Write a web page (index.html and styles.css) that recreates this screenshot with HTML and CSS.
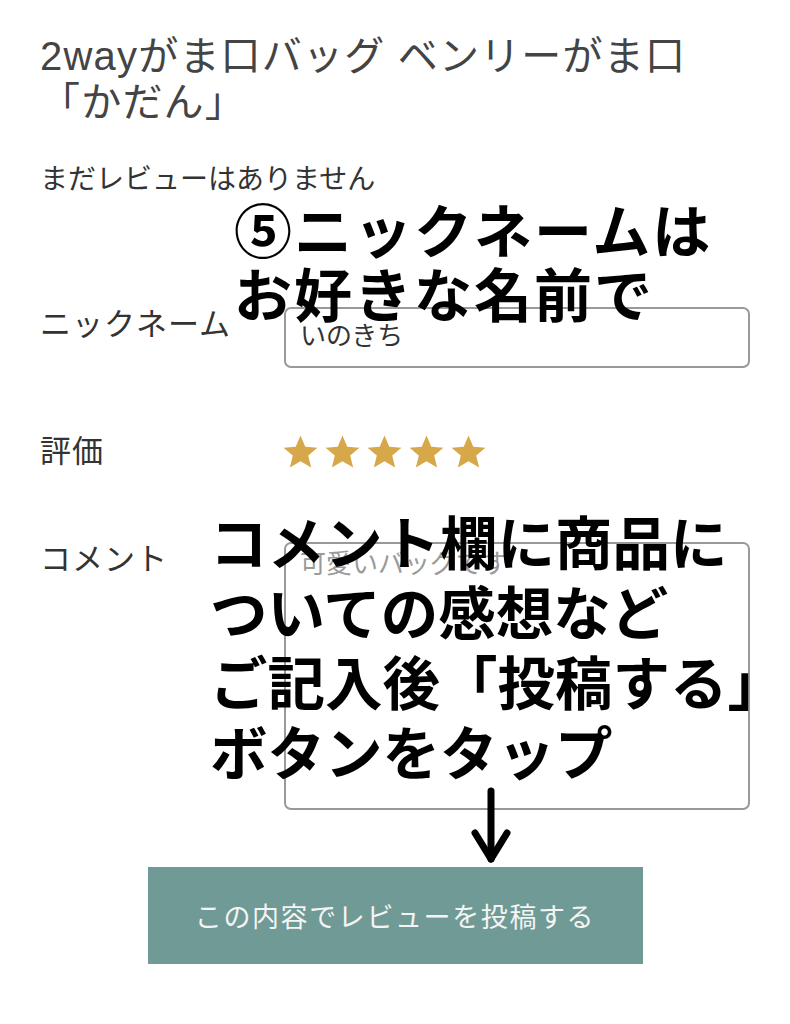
FILE: index.html
```html
<!DOCTYPE html>
<html lang="ja">
<head>
<meta charset="utf-8">
<title>レビュー投稿</title>
<link rel="stylesheet" href="styles.css">
</head>
<body>
<div class="page">
  <h1 class="title">2wayがま口バッグ ベンリーがま口<br>「かだん」</h1>
  <p class="no-review">まだレビューはありません</p>

  <div class="row row-nick">
    <div class="label">ニックネーム</div>
    <div class="field"><input class="text-input" type="text" value="いのきち"></div>
  </div>

  <div class="row row-rating">
    <div class="label">評価</div>
    <div class="field stars">
      <svg class="star" viewBox="0 0 24 24"><polygon points="12,1 15.1,8.3 23,8.9 17,14 18.9,21.8 12,17.6 5.1,21.8 7,14 1,8.9 8.9,8.3"/></svg>
      <svg class="star" viewBox="0 0 24 24"><polygon points="12,1 15.1,8.3 23,8.9 17,14 18.9,21.8 12,17.6 5.1,21.8 7,14 1,8.9 8.9,8.3"/></svg>
      <svg class="star" viewBox="0 0 24 24"><polygon points="12,1 15.1,8.3 23,8.9 17,14 18.9,21.8 12,17.6 5.1,21.8 7,14 1,8.9 8.9,8.3"/></svg>
      <svg class="star" viewBox="0 0 24 24"><polygon points="12,1 15.1,8.3 23,8.9 17,14 18.9,21.8 12,17.6 5.1,21.8 7,14 1,8.9 8.9,8.3"/></svg>
      <svg class="star" viewBox="0 0 24 24"><polygon points="12,1 15.1,8.3 23,8.9 17,14 18.9,21.8 12,17.6 5.1,21.8 7,14 1,8.9 8.9,8.3"/></svg>
    </div>
  </div>

  <div class="row row-comment">
    <div class="label">コメント</div>
    <div class="field"><textarea class="text-area" placeholder="可愛いバッグです"></textarea></div>
  </div>

  <div class="submit-wrap">
    <button class="submit" type="button">この内容でレビューを投稿する</button>
  </div>

  <div class="note note-nick">⑤ニックネームは<br>お好きな名前で</div>
  <div class="note note-comment">コメント欄に商品に<br>ついての感想など<br>ご記入後「投稿する」<br>ボタンをタップ</div>
  <svg class="arrow" viewBox="0 0 40 80" width="40" height="80">
    <line x1="20" y1="4" x2="20" y2="72" />
    <polyline points="4,46 20,72 36,46" />
  </svg>
</div>
</body>
</html>
```
FILE: styles.css
```css
* { box-sizing: border-box; }
html, body { margin: 0; padding: 0; background: #ffffff; }
body {
  font-family: "Liberation Sans", "Noto Sans CJK JP", sans-serif;
  color: #333333;
}
.page {
  position: relative;
  width: 790px;
  min-height: 1024px;
  padding: 33px 40px 0 40px;
  overflow: hidden;
}
.title {
  margin: 0;
  font-size: 40px;
  line-height: 46px;
  font-weight: 400;
  letter-spacing: 1.2px;
  color: #444444;
}
.no-review {
  margin: 35px 0 0 0;
  font-size: 28px;
  line-height: 40px;
  color: #333333;
}
.row {
  display: grid;
  grid-template-columns: 244px 466px;
  align-items: start;
}
.label {
  font-size: 31px;
  line-height: 36px;
  letter-spacing: 1px;
  color: #333333;
}
.row-nick { margin-top: 107px; }
.row-rating { margin-top: 66px; }
.row-comment { margin-top: 72px; }
.text-input, .text-area {
  display: block;
  width: 466px;
  border: 2px solid #999999;
  border-radius: 7px;
  font-family: "Liberation Sans", "Noto Sans CJK JP", sans-serif;
  font-size: 26px;
  line-height: 36px;
  color: #333333;
  background: #ffffff;
  outline: none;
}
.text-input {
  height: 61px;
  padding: 6px 14px 15px 14px;
}
.text-area {
  height: 268px;
  padding: 2px 14px;
  resize: none;
}
.text-area::placeholder { color: #9a9a9a; }
.stars {
  display: flex;
  gap: 5px;
  height: 36px;
  align-items: center;
  margin-left: -2px;
}
.star {
  width: 37px;
  height: 37px;
  fill: #d6a84a;
}
.submit-wrap {
  display: flex;
  justify-content: center;
  margin-top: 57px;
}
.submit {
  width: 495px;
  height: 97px;
  border: none;
  border-radius: 0;
  background: #6f9a95;
  color: #f4f4f4;
  font-family: "Noto Sans CJK JP", sans-serif;
  font-size: 27px;
  letter-spacing: 1.6px;
  font-weight: 400;
}
.note {
  position: absolute;
  font-family: "Noto Sans CJK JP", sans-serif;
  font-weight: 700;
  color: #000000;
  white-space: nowrap;
}
.note-nick {
  left: 234px;
  top: 196px;
  font-size: 58px;
  line-height: 64px;
  letter-spacing: 2px;
}
.note-comment {
  left: 210px;
  top: 505px;
  font-size: 57.5px;
  line-height: 70px;
  letter-spacing: 0;
}
.arrow {
  position: absolute;
  left: 471px;
  top: 787px;
  fill: none;
  stroke: #000000;
  stroke-width: 7;
  stroke-linecap: round;
  stroke-linejoin: round;
}
```
